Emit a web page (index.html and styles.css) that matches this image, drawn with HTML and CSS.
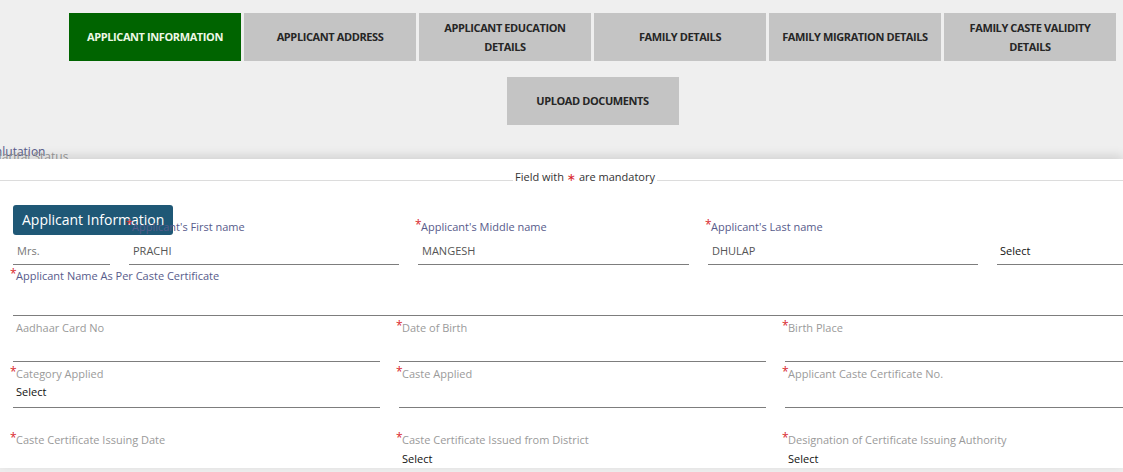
FILE: index.html
```html
<!doctype html>
<html lang="en">
<head>
    <meta charset="utf-8">
    <title>Applicant Information</title>
    <link rel="stylesheet" href="styles.css">
</head>
<body>
    <header class="steps">
        <nav class="tabs">
            <a class="tab active">APPLICANT INFORMATION</a>
            <a class="tab">APPLICANT ADDRESS</a>
            <a class="tab">APPLICANT EDUCATION DETAILS</a>
            <a class="tab">FAMILY DETAILS</a>
            <a class="tab">FAMILY MIGRATION DETAILS</a>
            <a class="tab">FAMILY CASTE VALIDITY DETAILS</a>
            <a class="tab">UPLOAD DOCUMENTS</a>
        </nav>
        <span class="stray salutation">Salutation</span>
        <span class="stray marital">Marital Status</span>
    </header>

    <main class="panel">
        <div class="mandatory"><span>Field with <b>&#x2217;</b> are mandatory</span></div>

        <form class="form">
            <div class="badge">Applicant Information</div>

            <div class="row names">
                <div class="field">
                    <label>&nbsp;</label>
                    <div class="input muted">Mrs.</div>
                </div>
                <div class="field">
                    <label><span class="req">*</span>Applicant's First name</label>
                    <div class="input">PRACHI</div>
                </div>
                <div class="field">
                    <label><span class="req">*</span>Applicant's Middle name</label>
                    <div class="input">MANGESH</div>
                </div>
                <div class="field">
                    <label><span class="req">*</span>Applicant's Last name</label>
                    <div class="input">DHULAP</div>
                </div>
                <div class="field">
                    <label>&nbsp;</label>
                    <div class="input select">Select</div>
                </div>
            </div>

            <div class="row full">
                <div class="field">
                    <label><span class="req">*</span>Applicant Name As Per Caste Certificate</label>
                    <div class="input"></div>
                </div>
            </div>

            <div class="row thirds">
                <div class="field">
                    <label class="grey">Aadhaar Card No</label>
                    <div class="input"></div>
                </div>
                <div class="field">
                    <label class="grey"><span class="req">*</span>Date of Birth</label>
                    <div class="input"></div>
                </div>
                <div class="field">
                    <label class="grey"><span class="req">*</span>Birth Place</label>
                    <div class="input"></div>
                </div>
            </div>

            <div class="row thirds">
                <div class="field">
                    <label class="grey"><span class="req">*</span>Category Applied</label>
                    <div class="input select">Select</div>
                </div>
                <div class="field">
                    <label class="grey"><span class="req">*</span>Caste Applied</label>
                    <div class="input"></div>
                </div>
                <div class="field">
                    <label class="grey"><span class="req">*</span>Applicant Caste Certificate No.</label>
                    <div class="input"></div>
                </div>
            </div>

            <div class="row thirds last">
                <div class="field">
                    <label class="grey"><span class="req">*</span>Caste Certificate Issuing Date</label>
                    <div class="input"></div>
                </div>
                <div class="field">
                    <label class="grey"><span class="req">*</span>Caste Certificate Issued from District</label>
                    <div class="input select">Select</div>
                </div>
                <div class="field">
                    <label class="grey"><span class="req">*</span>Designation of Certificate Issuing Authority</label>
                    <div class="input select">Select</div>
                </div>
            </div>
        </form>
    </main>
</body>
</html>
```

FILE: styles.css
```css
/* reset stuff */
html {
    box-sizing: border-box;
}

*, *:before, *:after {
    box-sizing: inherit;
}

body, form, label {
    margin: 0;
    padding: 0;
}

/* actual css */
:root {
    --bg-color: #efefef;
    --tab-color: #c4c4c4;
    --active-color: #006400;
    --badge-color: #1f5876;
    --label-color: #575b8b;
    --grey-label: #9a9a9a;
    --line-color: #7d7d7d;
}

body {
    font-family: "Open Sans", "DejaVu Sans", sans-serif;
    font-size: 11px;
    background-color: var(--bg-color);
    color: #333;
    overflow: hidden;
    height: 472px;
}

/* step tabs */
.steps {
    position: relative;
    height: 159px;
    padding-top: 13px;
}

.tabs {
    display: flex;
    flex-wrap: wrap;
    justify-content: center;
    gap: 16px 3px;
    width: 1047px;
    margin-left: 69px;
}

.tab {
    display: flex;
    align-items: center;
    justify-content: center;
    width: 172px;
    height: 48px;
    padding: 0 6px 1px;
    background-color: var(--tab-color);
    color: #262626;
    font-weight: bold;
    font-size: 11px;
    line-height: 19px;
    text-align: center;
    letter-spacing: -0.4px;
}

.tab.active {
    background-color: var(--active-color);
    color: #eef8e6;
}

.stray {
    position: absolute;
    white-space: nowrap;
}

.salutation {
    left: -11px;
    top: 143px;
    color: var(--label-color);
    font-size: 12px;
}

.marital {
    left: -9px;
    top: 148px;
    color: var(--grey-label);
    font-size: 12px;
}

/* white form panel */
.panel {
    position: relative;
    height: 309px;
    padding-top: 11px;
    background-color: #fff;
    box-shadow: 0 -3px 10px rgba(0, 0, 0, 0.13);
}

.mandatory {
    display: flex;
    align-items: flex-end;
    line-height: 14px;
    color: #333;
}

.mandatory::before,
.mandatory::after {
    content: "";
    border-bottom: 1px solid #dcdcdc;
    margin-bottom: 3px;
}

.mandatory::before {
    width: 513px;
    margin-right: 2px;
}

.mandatory::after {
    flex: 1;
    margin-left: 2px;
}

.mandatory b {
    color: #d9262b;
    font-weight: normal;
}

.form {
    position: relative;
    z-index: 0;
    width: 1139px;
    margin: 36px 0 0 13px;
    display: flex;
    flex-direction: column;
}

.badge {
    position: absolute;
    z-index: -1;
    left: 0;
    top: -15px;
    height: 30px;
    padding: 0 9px;
    border-radius: 3px;
    background-color: var(--badge-color);
    color: #fff;
    font-size: 14px;
    line-height: 30px;
    white-space: nowrap;
}

.row {
    display: grid;
    column-gap: 19px;
}

.names {
    grid-template-columns: 97px 270px 271px 270px 155px;
}

.full {
    grid-template-columns: 1fr;
    margin-top: 4px;
}

.thirds {
    grid-template-columns: repeat(3, 367px);
    margin-top: 5px;
}

.last {
    margin-top: 25px;
}

.field label {
    display: block;
    height: 14px;
    line-height: 14px;
    padding-left: 3px;
    color: var(--label-color);
    white-space: nowrap;
}

.field label.grey {
    color: var(--grey-label);
}

.req {
    display: inline-block;
    width: 6px;
    margin-left: -6px;
    color: #d9262b;
    font-size: 12px;
    line-height: 10px;
    vertical-align: top;
}

.input {
    height: 27px;
    padding: 4px 4px 0;
    line-height: 14px;
    border-bottom: 1px solid var(--line-color);
    color: #555;
}

.names .input {
    height: 31px;
    padding-top: 10px;
}

.full .input {
    height: 33px;
}

.last .input {
    height: 20px;
    padding-top: 5px;
    border-bottom: none;
}

.input.muted {
    color: #777;
}

.input.select {
    color: #111;
    padding-left: 3px;
}
```
